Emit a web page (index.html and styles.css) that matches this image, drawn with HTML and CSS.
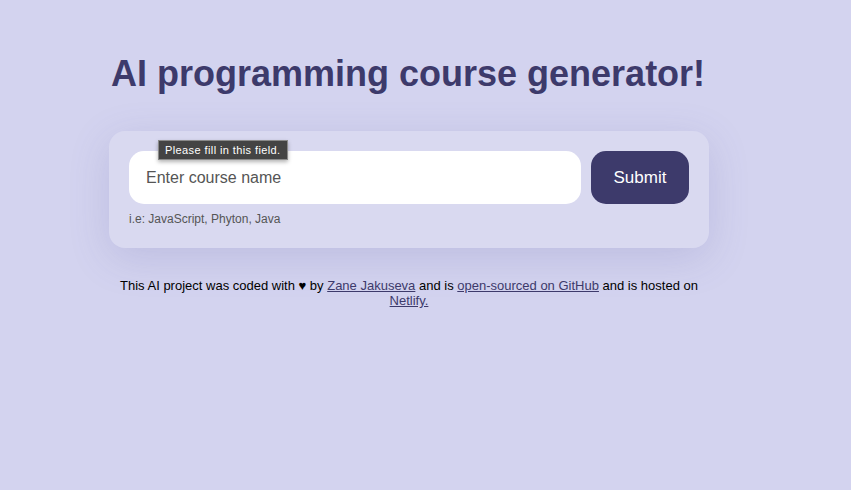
FILE: index.html
```html
<!DOCTYPE html>
<html lang="en">
<head>
<meta charset="utf-8">
<title>AI programming course generator</title>
<link rel="stylesheet" href="styles.css">
</head>
<body>
<div class="container">
  <h1 class="title">AI programming course generator!</h1>
  <form class="card">
    <div class="row">
      <div class="field">
        <input class="input" type="text" placeholder="Enter course name">
        <div class="tooltip">Please fill in this field.</div>
      </div>
      <button class="submit" type="button">Submit</button>
    </div>
    <div class="hint">i.e: JavaScript, Phyton, Java</div>
  </form>
  <p class="footer">This AI project was coded with ♥ by <a href="#">Zane Jakuseva</a> and is <a href="#">open-sourced on GitHub</a> and is hosted on <a href="#">Netlify.</a></p>
</div>
</body>
</html>
```
FILE: styles.css
```css
html, body {
  margin: 0;
  padding: 0;
}
body {
  background: #d3d3ef;
  font-family: "Liberation Sans", Arial, sans-serif;
  min-height: 490px;
}
.container {
  width: 600px;
  margin-left: 109px;
  padding-top: 52px;
}
.title {
  margin: 0 0 0 2px;
  font-size: 36px;
  font-weight: 700;
  color: #3d3a6b;
  line-height: 44px;
}
.card {
  margin-top: 35px;
  background: #d9d9f0;
  border-radius: 16px;
  padding: 20px 20px 22px;
  box-shadow: 0 10px 40px rgba(90, 90, 160, 0.18);
}
.row {
  display: flex;
  gap: 10px;
}
.field {
  position: relative;
  flex: 1;
}
.input {
  box-sizing: border-box;
  width: 100%;
  height: 53px;
  border: none;
  border-radius: 15px;
  background: #fff;
  padding: 0 17px;
  font-family: "Liberation Sans", Arial, sans-serif;
  font-size: 16px;
  outline: none;
}
.input::placeholder {
  color: #555;
}
.tooltip {
  position: absolute;
  left: 29px;
  top: -11px;
  background: #444;
  border: 1px solid #8a8a8a;
  color: #fff;
  font-size: 11px;
  letter-spacing: 0.4px;
  line-height: 18px;
  padding: 0 6px;
  box-shadow: 0 2px 4px rgba(0,0,0,0.3);
}
.submit {
  width: 98px;
  height: 53px;
  border: none;
  border-radius: 15px;
  background: #3d3a6b;
  color: #fff;
  font-family: "Liberation Sans", Arial, sans-serif;
  font-size: 17px;
}
.hint {
  margin-top: 8px;
  font-size: 12px;
  color: #555;
}
.footer {
  margin: 30px 0 0;
  text-align: center;
  font-size: 13px;
  line-height: 15px;
  color: #000;
}
.footer a {
  color: #3d3a6b;
}
```
